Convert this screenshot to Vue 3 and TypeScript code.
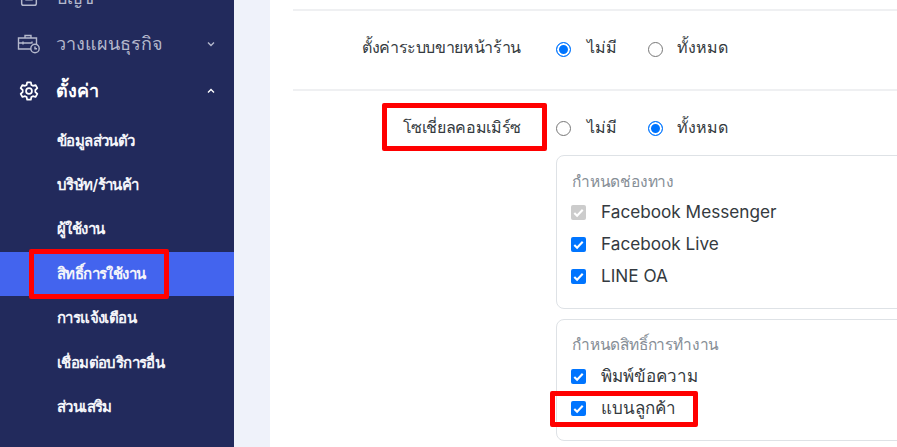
<script setup lang="ts">
const subItems = [
  { label: 'ข้อมูลส่วนตัว', active: false },
  { label: 'บริษัท/ร้านค้า', active: false },
  { label: 'ผู้ใช้งาน', active: false },
  { label: 'สิทธิ์การใช้งาน', active: true },
  { label: 'การแจ้งเตือน', active: false },
  { label: 'เชื่อมต่อบริการอื่น', active: false },
  { label: 'ส่วนเสริม', active: false },
]
const channels = [
  { label: 'Facebook Messenger', disabled: true },
  { label: 'Facebook Live', disabled: false },
  { label: 'LINE OA', disabled: false },
]
const permissions = [
  { label: 'พิมพ์ข้อความ', disabled: false },
  { label: 'แบนลูกค้า', disabled: false },
]
</script>

<template>
  <div class="page">
    <aside class="sidebar">
      <div class="menu-item dim clipped">
        <svg class="ico" viewBox="0 0 24 24" fill="none" stroke="currentColor" stroke-width="1.6"><rect x="4" y="4" width="16" height="16" rx="2"/><path d="M8 14h8"/></svg>
        <span class="menu-label">บัญชี</span>
      </div>
      <div class="menu-item dim">
        <svg class="ico wide" viewBox="0 0 24 24" fill="none" stroke="currentColor" stroke-width="1.4">
          <path d="M8 6V3.500h6V6M1.500 6h18v11h-18zM1.500 11h13M6 9.500v3M15 9.500v2"/>
          <circle cx="18" cy="16.500" r="4.200" fill="#222a5c"/><path d="M18 14.500v2.200h2"/>
        </svg>
        <span class="menu-label">วางแผนธุรกิจ</span>
        <svg class="chev" viewBox="0 0 10 10" fill="none" stroke="currentColor" stroke-width="1.400"><path d="M2 3.500l3 3 3-3"/></svg>
      </div>
      <div class="menu-item bright">
        <svg class="ico" viewBox="0 0 24 24" fill="none" stroke="currentColor" stroke-width="1.900" stroke-linejoin="round">
          <path d="M10 2.500h4l.6 2.900 1.700 1 2.800-.9 2 3.400-2.200 2v2.200l2.200 2-2 3.400-2.800-.9-1.700 1-.6 2.900h-4l-.6-2.900-1.700-1-2.800.9-2-3.400 2.200-2v-2.200l-2.200-2 2-3.400 2.800.9 1.700-1z"/>
          <circle cx="12" cy="12" r="3.200"/>
        </svg>
        <span class="menu-label">ตั้งค่า</span>
        <svg class="chev" viewBox="0 0 10 10" fill="none" stroke="currentColor" stroke-width="1.400"><path d="M2 6.500l3-3 3 3"/></svg>
      </div>
      <div class="subs">
        <div v-for="s in subItems" :key="s.label" class="sub-item" :class="{ active: s.active }">{{ s.label }}</div>
      </div>
    </aside>

    <div class="gutter"></div>

    <main class="main">
      <div class="row first">
        <div class="row-label">ตั้งค่าระบบขายหน้าร้าน</div>
        <div class="radios">
          <span class="radio on"></span><span class="radio-text">ไม่มี</span>
          <span class="radio"></span><span class="radio-text">ทั้งหมด</span>
        </div>
      </div>
      <div class="row second">
        <div class="row-label">โซเชี่ยลคอมเมิร์ซ</div>
        <div class="options">
          <div class="radios">
            <span class="radio"></span><span class="radio-text">ไม่มี</span>
            <span class="radio on"></span><span class="radio-text">ทั้งหมด</span>
          </div>
          <section class="card one">
            <h4 class="card-title">กำหนดช่องทาง</h4>
            <label v-for="c in channels" :key="c.label" class="check">
              <span class="box" :class="{ disabled: c.disabled }">
                <svg viewBox="0 0 16 16" fill="none" stroke="#fff" stroke-width="2.200"><path d="M3.500 8.500l3 3 6-6.500"/></svg>
              </span>
              <span>{{ c.label }}</span>
            </label>
          </section>
          <section class="card two">
            <h4 class="card-title">กำหนดสิทธิ์การทำงาน</h4>
            <label v-for="c in permissions" :key="c.label" class="check">
              <span class="box">
                <svg viewBox="0 0 16 16" fill="none" stroke="#fff" stroke-width="2.200"><path d="M3.500 8.500l3 3 6-6.500"/></svg>
              </span>
              <span>{{ c.label }}</span>
            </label>
          </section>
        </div>
      </div>
    </main>

    <div class="mark mark-side"></div>
    <div class="mark mark-label"></div>
    <div class="mark mark-ban"></div>
  </div>
</template>

<style>
html, body { margin: 0; overflow: hidden; background: #fff; }
</style>

<style scoped>
.page {
  position: relative;
  width: 897px;
  height: 447px;
  display: flex;
  overflow: hidden;
  font-family: Inter, "Noto Sans", "Liberation Sans", sans-serif;
  color: #343a40;
}
.sidebar {
  width: 234px;
  flex: none;
  background: #222a5c;
  color: #fff;
  margin-top: -25px;
}
.menu-item {
  height: 47px;
  display: flex;
  align-items: center;
  padding-left: 17px;
  box-sizing: border-box;
}
.menu-item.clipped { height: 45px; }
.menu-item.dim { color: #b4b8cc; font-size: 18px; }
.menu-item.bright { color: #fff; font-size: 18px; font-weight: 600; }
.ico { width: 22px; height: 22px; flex: none; margin: 0 1px; }
.ico.wide { width: 24px; height: 24px; margin: 0; }
.menu-label { margin-left: 15px; flex: 1; }
.chev { width: 10px; height: 10px; flex: none; margin-right: 18px; }
.subs { margin-top: 4.500px; }
.sub-item {
  height: 44.400px;
  display: flex;
  align-items: center;
  padding-left: 57px;
  font-size: 15px;
  font-weight: 600;
  letter-spacing: -0.6px;
  color: #f4f5fa;
}
.sub-item.active { background: #4364ee; }
.gutter { width: 36px; flex: none; background: #eff2fa; }
.main { flex: 1; padding-left: 23px; min-width: 0; }
.row { display: flex; border-top: 2px solid #eff0f2; box-sizing: border-box; }
.row.first { height: 80px; margin-top: 9px; padding-top: 24px; align-items: flex-start; }
.row.second { padding-top: 24px; }
.row-label {
  width: 228px;
  text-align: right;
  font-size: 16px;
  letter-spacing: -0.35px;
  line-height: 24px;
  flex: none;
}
.options { margin-left: 35px; flex: 1; }
.first .radios { margin-left: 35px; }
.first .radio { margin-top: 5px; }
.radios { display: flex; align-items: center; height: 24px; font-size: 16px; }
.radio {
  width: 15px; height: 15px;
  box-sizing: border-box;
  border-radius: 50%;
  border: 1px solid #777;
  flex: none;
  background: #fff;
  margin-top: 3px;
}
.radio.on {
  border-color: #0075ff;
  box-shadow: inset 0 0 0 2px #fff;
  background: #0075ff;
}
.radio-text { margin-left: 16px; width: 61px; }
.radio-text:last-child { width: auto; margin-left: 14px; letter-spacing: 0.1px; }
.card {
  width: 400px;
  border: 1px solid #dee2e6;
  border-radius: 8px;
  box-sizing: border-box;
  padding: 16px 15px;
}
.card.one { height: 154px; margin-top: 16px; }
.card.two { height: 122px; margin-top: 10px; }
.card-title {
  margin: -1px 0 2px;
  font-size: 15.500px;
  letter-spacing: -0.2px;
  line-height: 22px;
  font-weight: 400;
  color: #868e96;
}
.card.two .card-title { margin: -2px 0 3px; }
.check {
  display: flex;
  align-items: center;
  height: 32px;
  font-size: 17.200px;
  gap: 15px;
  margin-left: -1px;
}
.card.two .check { font-size: 17px; }
.box {
  width: 15px; height: 15px;
  border-radius: 2px;
  background: #0075ff;
  flex: none;
  display: block;
  margin-top: 2px;
}
.box svg { display: block; width: 15px; height: 15px; }
.box.disabled { background: #ccc; }
.mark {
  position: absolute;
  border: 5px solid #ff0000;
  border-radius: 2px;
  box-sizing: border-box;
}
.mark-side { left: 29px; top: 249px; width: 140px; height: 50px; }
.mark-label { left: 382px; top: 103px; width: 165px; height: 48px; }
.mark-ban { left: 550px; top: 391px; width: 148px; height: 36px; }
</style>
